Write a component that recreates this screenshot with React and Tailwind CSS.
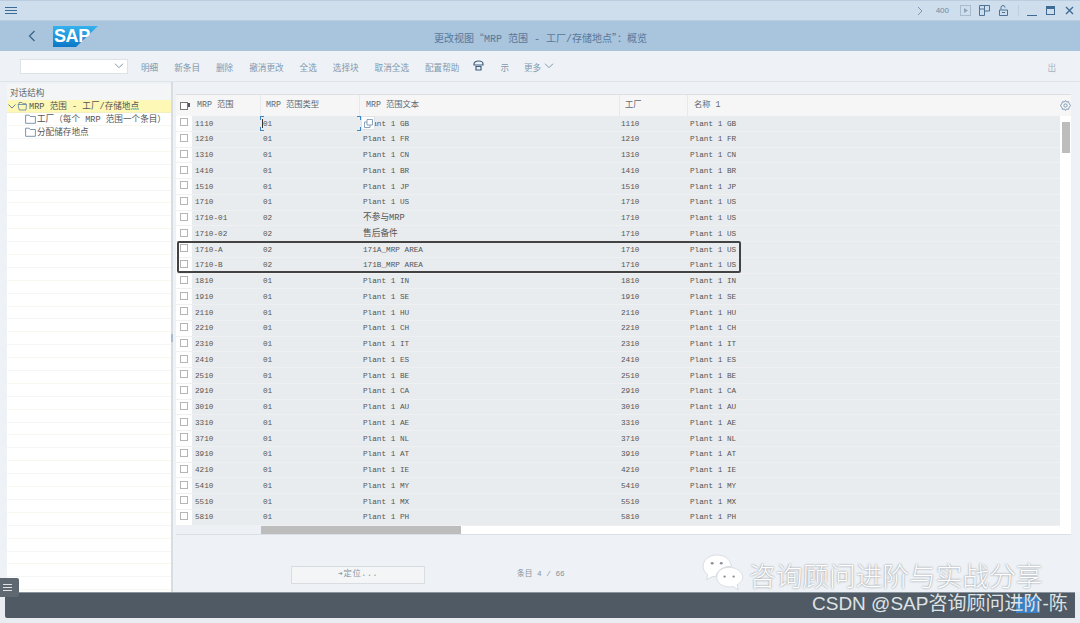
const F = { fontFamily: '"Liberation Mono","Noto Sans CJK SC",monospace' };
const CJK = { fontFamily: '"Noto Sans CJK SC",sans-serif' };

const plant = (s) => `Plant 1 ${s}`;
const rows = [
  ["1110", "01", plant("GB"), "1110", "GB"],
  ["1210", "01", plant("FR"), "1210", "FR"],
  ["1310", "01", plant("CN"), "1310", "CN"],
  ["1410", "01", plant("BR"), "1410", "BR"],
  ["1510", "01", plant("JP"), "1510", "JP"],
  ["1710", "01", plant("US"), "1710", "US"],
  ["1710-01", "02", "不参与MRP", "1710", "US"],
  ["1710-02", "02", "售后备件", "1710", "US"],
  ["1710-A", "02", "171A_MRP AREA", "1710", "US"],
  ["1710-B", "02", "171B_MRP AREA", "1710", "US"],
  ["1810", "01", plant("IN"), "1810", "IN"],
  ["1910", "01", plant("SE"), "1910", "SE"],
  ["2110", "01", plant("HU"), "2110", "HU"],
  ["2210", "01", plant("CH"), "2210", "CH"],
  ["2310", "01", plant("IT"), "2310", "IT"],
  ["2410", "01", plant("ES"), "2410", "ES"],
  ["2510", "01", plant("BE"), "2510", "BE"],
  ["2910", "01", plant("CA"), "2910", "CA"],
  ["3010", "01", plant("AU"), "3010", "AU"],
  ["3310", "01", plant("AE"), "3310", "AE"],
  ["3710", "01", plant("NL"), "3710", "NL"],
  ["3910", "01", plant("AT"), "3910", "AT"],
  ["4210", "01", plant("IE"), "4210", "IE"],
  ["5410", "01", plant("MY"), "5410", "MY"],
  ["5510", "01", plant("MX"), "5510", "MX"],
  ["5810", "01", plant("PH"), "5810", "PH"],
];

const tools = ["明细", "新条目", "删除", "撤消更改", "全选", "选择块", "取消全选", "配置帮助"];

function Folder({ open }) {
  return (
    <svg width="11" height="10" viewBox="0 0 11 10" fill="none" stroke="#6f8aa5" strokeWidth="0.9" className="shrink-0">
      {open ? (
        <path d="M1 3.500h8.500L9 9H2.200L1 3.500zM2 3.500V1.500h3l1 1.200h3v1" />
      ) : (
        <path d="M.6 1.200h3.600l1 1.300h5.200v6.800H.6z" />
      )}
    </svg>
  );
}

function TopIcons() {
  const stroke = "#4f7396";
  return (
    <div className="flex items-center">
      <svg width="8" height="10" viewBox="0 0 8 10" fill="none" stroke="#7e97ae" strokeWidth="1" className="mr-[12px]"><path d="M2 1l4 4-4 4" /></svg>
      <span className="text-[8px] text-[#6e8aa5] mr-[11px]" style={{ fontFamily: '"Liberation Sans",sans-serif' }}>400</span>
      <svg width="11" height="11" viewBox="0 0 11 11" fill="none" className="mr-[8px]"><rect x=".5" y=".5" width="10" height="10" stroke="#a9bccd" /><path d="M4 3l4 2.500L4 8z" fill="#8fa6bb" /></svg>
      <svg width="11" height="11" viewBox="0 0 11 11" fill="none" stroke={stroke} className="mr-[9px]"><path d="M.5.5h10v5.500H5.500v4.500h-5zM5.500.5V6M.5 4h5" /></svg>
      <svg width="9" height="11" viewBox="0 0 9 11" fill="none" stroke={stroke} className="mr-[10px]"><path d="M2 4.500V2.500a2 2 0 014 0M.5 5h8v5.500h-8z" /><path d="M3 7.500h3" /></svg>
      <div className="w-px h-[11px] bg-[#bccfe0] mr-[8px]" />
      <div className="w-[10px] h-[11px] border-b-[1.5px] border-[#3f6a91] mr-[9px]" />
      <div className="w-[9px] h-[9px] border border-t-[3px] border-[#3f6a91] mr-[10px]" />
      <svg width="9" height="9" viewBox="0 0 9 9" stroke="#3f6a91" strokeWidth="1.400"><path d="M1 1l7 7M8 1L1 8" /></svg>
    </div>
  );
}

function Logo() {
  return (
    <div className="relative w-[45px] h-[21px]">
      <svg width="45" height="21" viewBox="0 0 45 21" className="absolute inset-0">
        <defs>
          <linearGradient id="sapg" x1="0" y1="0" x2="0" y2="1">
            <stop offset="0" stopColor="#35b3ee" />
            <stop offset="1" stopColor="#0a78c8" />
          </linearGradient>
        </defs>
        <path d="M0 0h45L23 21H0z" fill="url(#sapg)" />
      </svg>
      <span className="absolute left-[1px] top-[1px] text-white font-bold text-[18px] leading-[19px] tracking-[-0.4px]" style={{ fontFamily: '"Liberation Sans",sans-serif' }}>SAP</span>
    </div>
  );
}

function Cell({ w, children, cls = "" }) {
  return <div className={`shrink-0 h-full flex items-center overflow-hidden whitespace-nowrap ${cls}`} style={{ width: w }}>{children}</div>;
}

const hasCjk = (s) => /[^\x00-\x7f]/.test(s);

export default function App() {
  return (
    <div className="relative w-[1080px] h-[623px] overflow-hidden flex flex-col bg-[#eef2f6] text-[#555]" style={F}>
      {/* shell bar */}
      <div className="h-[21px] shrink-0 bg-[#cfdeec] border-t border-b border-[#bccde0] flex items-center justify-between pl-[5px] pr-[6px]">
        <div className="flex flex-col gap-[2px] w-[12px]">
          <div className="h-px bg-[#3a6a96]" />
          <div className="h-px bg-[#3a6a96]" />
          <div className="h-px bg-[#3a6a96]" />
        </div>
        <TopIcons />
      </div>
      {/* title bar */}
      <div className="h-[30px] shrink-0 bg-[#a9c4dd] flex items-center relative">
        <svg width="8" height="12" viewBox="0 0 8 12" fill="none" stroke="#3d6689" strokeWidth="1.300" className="ml-[28px] mr-[17px]"><path d="M6.500 1L1.500 6l5 5" /></svg>
        <Logo />
        <div className="flex-1 text-center text-[10px] text-[#56789a] pr-[97px] pt-[4px]">更改视图<span style={CJK}>“</span>MRP 范围 - 工厂/存储地点<span style={CJK}>”</span>：概览</div>
      </div>
      {/* toolbar */}
      <div className="h-[31px] shrink-0 border-b border-[#dfe4e9] flex items-center pl-[20px] pr-[24px] text-[8.6px] text-[#7f98af]">
        <div className="w-[108px] h-[15px] bg-white border border-[#dde2e7] flex items-center justify-end pr-[3px] mr-[13px]">
          <svg width="10" height="6" viewBox="0 0 10 6" fill="none" stroke="#7f98af"><path d="M1 .7l4 4 4-4" /></svg>
        </div>
        <div className="flex items-center gap-[16px] pt-[6px]">
          {tools.map((t) => <span key={t}>{t}</span>)}
        </div>
        <svg width="11" height="11" viewBox="0 0 11 11" fill="none" stroke="#3f5f7d" strokeWidth="1.200" className="ml-[14px] mt-[-1px]"><path d="M1 4c0-4 9-4 9 0v1H1zM3 6.500h5V10H3z" /></svg>
        <span className="ml-[16px] pt-[6px]">示</span>
        <span className="ml-[15px] pt-[6px]">更多</span>
        <svg width="10" height="6" viewBox="0 0 10 6" fill="none" stroke="#7f98af" className="ml-[3px]"><path d="M1 .7l4 4 4-4" /></svg>
        <span className="ml-auto pt-[6px] text-[#a3b4c4]">出</span>
      </div>
      {/* body */}
      <div className="flex-1 min-h-0 flex pl-[7px]">
        {/* tree */}
        <div className="relative w-[166px] shrink-0 border-r-2 border-[#d9dde1] flex flex-col pt-[2px]">
          <div className="h-[16px] shrink-0 bg-[#f3f5f7] pl-[3px] pt-[4px] flex items-center text-[8.6px] text-[#666]">对话结构</div>
          <div className="flex-1 overflow-hidden bg-white text-[8.6px]">
            <div className="h-[13px] bg-[#fdf8b6] border-b border-[#f4efc0] flex items-center text-[#555]">
              <svg width="8" height="5" viewBox="0 0 8 5" fill="none" stroke="#5f7f9d" className="ml-[1px] mr-[1px]"><path d="M.5.5l3.500 3.500L7.500 .5" /></svg>
              <Folder open />
              <span className="ml-[1px] pt-[2px] whitespace-nowrap">MRP 范围 - 工厂/存储地点</span>
            </div>
            <div className="h-[13px] border-b border-[#f8f7ee] flex items-center pl-[18px] gap-[1px]">
              <Folder />
              <span className="pt-[2px] whitespace-nowrap">工厂（每个 MRP 范围一个条目）</span>
            </div>
            <div className="h-[13px] border-b border-[#f4f5f6] flex items-center pl-[18px] gap-[1px]">
              <Folder />
              <span className="pt-[2px] whitespace-nowrap">分配储存地点</span>
            </div>
            {Array.from({ length: 35 }).map((_, i) => (
              <div key={i} className={`h-[12.9px] border-b ${i % 2 ? "border-[#f4f5f6]" : "border-[#f9f8ee]"}`} />
            ))}
          </div>
          <div className="absolute right-[-2px] top-[252px] w-[2px] h-[8px] bg-[#a9bccd]" />
        </div>
        {/* table area */}
        <div className="flex-1 min-w-0 flex flex-col pl-[3px] pr-[9px] pt-[12px]">
          <div className="relative shrink-0 border-t border-[#dcdfe3] border-b bg-white">
            <div className="h-[21px] bg-[#f6f6f6] flex text-[8.300px] text-[#5f6a74] relative">
              <Cell w={16} cls="justify-center">
                <div className="relative w-[8px] h-[8px] border border-[#777] bg-white">
                  <div className="absolute right-[-3px] top-0 w-[2px] h-[4px] bg-[#556]" />
                </div>
              </Cell>
              <Cell w={69} cls="pl-[5px] border-r border-[#e6e8ea]">MRP 范围</Cell>
              <Cell w={99} cls="pl-[5px] border-r border-[#e6e8ea]">MRP 范围类型</Cell>
              <Cell w={260} cls="pl-[6px] border-r border-[#e6e8ea]">MRP 范围文本</Cell>
              <Cell w={68} cls="pl-[5px] border-r border-[#e6e8ea]">工厂</Cell>
              <Cell w={300} cls="pl-[6px]">名称 1</Cell>
              <svg width="11" height="11" viewBox="0 0 10 10" fill="none" stroke="#6d8eab" strokeWidth=".8" className="absolute right-[0px] top-[5px]">
                <circle cx="5" cy="5" r="1.500" />
                <path d="M5 .5l1 1.300 1.700-.3.600 1.600L9.500 5l-1.200 1.900-.6 1.600-1.700-.3L5 9.500 4 8.200l-1.700.3-.6-1.600L.5 5l1.200-1.900.6-1.600 1.700.3z" />
              </svg>
            </div>
            <div className="flex">
              <div className="flex-1 min-w-0 relative">
                {rows.map((r) => (
                  <div key={r[0]} className="h-[15.76px] flex text-[7.700px] text-[#555] border-b border-[#eef0f2] bg-[#e9ecef]">
                    <Cell w={16} cls="justify-center bg-white pb-[2px]">
                      <div className="w-[8px] h-[8px] border border-[#b5b5b5] bg-white" />
                    </Cell>
                    <Cell w={69} cls="pl-[3px] pt-[2px]">{r[0]}</Cell>
                    <Cell w={99} cls="pl-[2px] pt-[2px]">{r[1]}</Cell>
                    <Cell w={260} cls={`pl-[3px] pt-[2px] ${hasCjk(r[2]) ? "text-[8.700px]" : ""}`}>{r[2]}</Cell>
                    <Cell w={68} cls="pl-[1px] pt-[2px]">{r[3]}</Cell>
                    <Cell w={300} cls="pl-[2px] pt-[2px]">{plant(r[4])}</Cell>
                  </div>
                ))}
                {/* focused cell corners and cursor */}
                <div className="absolute left-[84px] top-0 w-[4px] h-[4px] border-l border-t border-[#3d86c6]" />
                <div className="absolute left-[84px] top-[11px] w-[4px] h-[4px] border-l border-b border-[#3d86c6]" />
                <div className="absolute left-[181px] top-0 w-[4px] h-[4px] border-r border-t border-[#3d86c6]" />
                <div className="absolute left-[181px] top-[11px] w-[4px] h-[4px] border-r border-b border-[#3d86c6]" />
                <div className="absolute left-[86px] top-[3px] w-px h-[9px] bg-[#333]" />
                <div className="absolute left-[185px] top-0 w-[14px] h-[14px] bg-white border border-[#dfe3e7] flex items-center justify-center">
                  <svg width="9" height="9" viewBox="0 0 9 9" fill="none" stroke="#6d8eab" strokeWidth=".8"><path d="M3 .5h5.500V6H3zM3 3H.5v5.500H6V6" /></svg>
                </div>
                {/* highlight box */}
                <div className="absolute left-[1px] top-[125px] w-[564px] h-[32px] border-2 border-[#434343] rounded-[2px]" />
              </div>
              <div className="w-[11px] shrink-0 bg-white pt-[6px] pl-[2px] pr-[1px]">
                <div className="h-[31px] bg-[#bdbdbd]" />
              </div>
            </div>
            <div className="h-[8px] flex">
              <div className="w-[85px] bg-[#edf1f5]" />
              <div className="w-[200px] bg-[#bdbdbd]" />
              <div className="flex-1 bg-white" />
            </div>
          </div>
          {/* footer controls */}
          <div className="flex items-center mt-[31px] text-[7.700px] text-[#8a939c]">
            <div className="ml-[115px] w-[134px] h-[18px] bg-[#f4f5f6] border border-[#d9dce0] flex items-center justify-center gap-[1px]">
              <span className="text-[#7f98af]">➜</span>
              <span className="tracking-[0.6px] text-[8.300px]">定位...</span>
            </div>
            <span className="ml-[92px]">条目 4 / 66</span>
          </div>
        </div>
      </div>
      {/* status bar */}
      <div className="h-[31px] shrink-0 pl-[5px] pr-[5px] pb-[5px] bg-[#e9edf1]">
        <div className="h-full bg-[#4f5a64] border-t border-[#8a949d] rounded-bl-[2px]" />
      </div>
      {/* floating tab */}
      <div className="absolute left-0 top-[578px] w-[19px] h-[19px] bg-[#5f6871] rounded-r-[2px] flex flex-col justify-center gap-[2px] pl-[3px]">
        <div className="w-[9px] h-px bg-[#dfe3e7]" />
        <div className="w-[9px] h-px bg-[#dfe3e7]" />
        <div className="w-[9px] h-px bg-[#dfe3e7]" />
      </div>
      {/* watermark */}
      <svg width="43" height="37" viewBox="0 0 38 36" preserveAspectRatio="none" className="absolute left-[702px] top-[554px]">
        <path d="M13 1C6 1 1 6 1 12c0 4 2 6 4 8l-1 5 5-3h3c3-9 9-10 14-10C25 5 20 1 13 1z" fill="#fff" stroke="#c9ced3" strokeWidth=".6" />
        <path d="M24 13c-6 0-11 4-11 9.500S18 32 24 32c1.500 0 2.500 0 3.500-.5L32 35l-1-5c3-2 5-4.500 5-7.500C36 17 30 13 24 13z" fill="#fff" stroke="#c9ced3" strokeWidth=".6" />
        <circle cx="9" cy="9" r="1.300" fill="#8b9197" />
        <circle cx="17" cy="9" r="1.300" fill="#8b9197" />
        <circle cx="20" cy="22" r="1.100" fill="#8b9197" />
        <circle cx="28" cy="22" r="1.100" fill="#8b9197" />
      </svg>
      <div className="absolute left-[749px] top-[557px] text-[26.700px] leading-[36px] text-white whitespace-nowrap font-light [text-shadow:0_0_2px_#6b7279]" style={CJK}>咨询顾问进阶与实战分享</div>
      <div className="absolute left-[1016px] top-[597px] w-[24px] h-[16px] bg-[#3a80c4]" />
      <div className="absolute left-[812px] top-[591px] text-[19px] leading-[26px] text-[#dfe3e6] whitespace-nowrap" style={{ fontFamily: '"Liberation Sans","Noto Sans CJK SC",sans-serif' }}>CSDN @SAP咨询顾问进阶-陈</div>
    </div>
  );
}
